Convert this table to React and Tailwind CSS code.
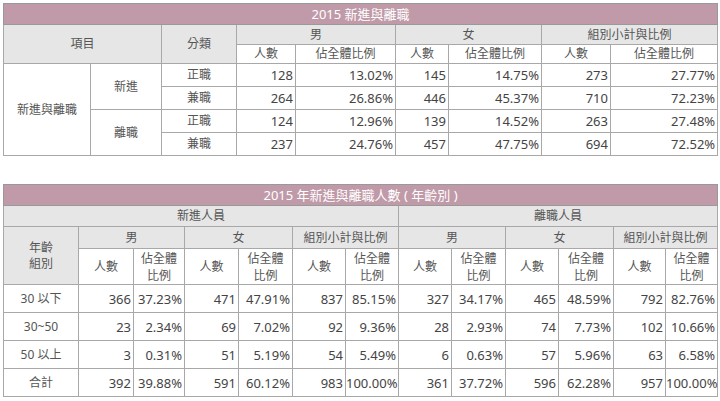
const font = { fontFamily: '"Noto Sans", "Noto Sans CJK TC", sans-serif' };

const topRows = [
  ["正職", "128", "13.02%", "145", "14.75%", "273", "27.77%"],
  ["兼職", "264", "26.86%", "446", "45.37%", "710", "72.23%"],
  ["正職", "124", "12.96%", "139", "14.52%", "263", "27.48%"],
  ["兼職", "237", "24.76%", "457", "47.75%", "694", "72.52%"],
];

const ageRows = [
  ["30 以下", "366", "37.23%", "471", "47.91%", "837", "85.15%", "327", "34.17%", "465", "48.59%", "792", "82.76%"],
  ["30~50", "23", "2.34%", "69", "7.02%", "92", "9.36%", "28", "2.93%", "74", "7.73%", "102", "10.66%"],
  ["50 以上", "3", "0.31%", "51", "5.19%", "54", "5.49%", "6", "0.63%", "57", "5.96%", "63", "6.58%"],
  ["合計", "392", "39.88%", "591", "60.12%", "983", "100.00%", "361", "37.72%", "596", "62.28%", "957", "100.00%"],
];

const th = "border border-[#a8a8a8] bg-[#e6e6e6] font-normal text-center text-[#555] text-[12px] p-0";
const thw = "border border-[#a8a8a8] bg-white font-normal text-center text-[#555] text-[12px] p-0";
const td = "border border-[#a8a8a8] bg-white text-right text-[#444] text-[13px] pr-[2px] p-0";
const tdc = "border border-[#a8a8a8] bg-white text-center text-[#555] text-[12px] p-0";

function TopTable() {
  const cols = [87, 71, 75, 59, 100, 53, 93, 69, 107];
  return (
    <table className="table-fixed border-collapse w-[714px] leading-[16px] border border-[#999]">
      <colgroup>
        {cols.map((w, i) => (
          <col key={i} style={{ width: w }} />
        ))}
      </colgroup>
      <thead>
        <tr className="h-[21px]">
          <th colSpan={9} className="border border-[#999] bg-[#c09aa8] text-white text-[13px] font-normal text-center p-0">
            2015 新進與離職
          </th>
        </tr>
        <tr className="h-[20px]">
          <th colSpan={2} rowSpan={2} className={th}>項目</th>
          <th rowSpan={2} className={th}>分類</th>
          <th colSpan={2} className={th}>男</th>
          <th colSpan={2} className={th}>女</th>
          <th colSpan={2} className={th}>組別小計與比例</th>
        </tr>
        <tr className="h-[19px]">
          <th className={thw}>人數</th>
          <th className={thw}>佔全體比例</th>
          <th className={thw}>人數</th>
          <th className={thw}>佔全體比例</th>
          <th className={thw}>人數</th>
          <th className={thw}>佔全體比例</th>
        </tr>
      </thead>
      <tbody>
        {topRows.map((r, i) => (
          <tr key={i} className="h-[23px]">
            {i === 0 && (
              <td rowSpan={4} className={tdc}>新進與離職</td>
            )}
            {i % 2 === 0 && (
              <td rowSpan={2} className={tdc}>{i === 0 ? "新進" : "離職"}</td>
            )}
            <td className={tdc}>{r[0]}</td>
            {r.slice(1).map((v, j) => (
              <td key={j} className={td}>{v}</td>
            ))}
          </tr>
        ))}
      </tbody>
    </table>
  );
}

function AgeTable() {
  const cols = [75, 55, 51, 54, 54, 53, 53, 53, 54, 53, 55, 52, 52];
  const split = (
    <>
      <th className={thw}>人數</th>
      <th className={thw + " leading-[17px]"}>佔全體<br />比例</th>
    </>
  );
  return (
    <table className="table-fixed border-collapse w-[714px] leading-[16px] border border-[#999]">
      <colgroup>
        {cols.map((w, i) => (
          <col key={i} style={{ width: w }} />
        ))}
      </colgroup>
      <thead>
        <tr className="h-[21px]">
          <th colSpan={13} className="border border-[#999] bg-[#c09aa8] text-white text-[13px] font-normal text-center p-0">
            2015 年新進與離職人數 ( 年齡別 )
          </th>
        </tr>
        <tr className="h-[21px]">
          <th colSpan={7} className={th}>新進人員</th>
          <th colSpan={6} className={th}>離職人員</th>
        </tr>
        <tr className="h-[22px]">
          <th rowSpan={2} className={th + " leading-[16px]"}>年齡<br />組別</th>
          <th colSpan={2} className={th}>男</th>
          <th colSpan={2} className={th}>女</th>
          <th colSpan={2} className={th}>組別小計與比例</th>
          <th colSpan={2} className={th}>男</th>
          <th colSpan={2} className={th}>女</th>
          <th colSpan={2} className={th}>組別小計與比例</th>
        </tr>
        <tr className="h-[36px]">
          {split}
          {split}
          {split}
          {split}
          {split}
          {split}
        </tr>
      </thead>
      <tbody>
        {ageRows.map((r, i) => (
          <tr key={i} className="h-[28px]">
            <td className={tdc}>{r[0]}</td>
            {r.slice(1).map((v, j) => (
              <td key={j} className={td}>{v}</td>
            ))}
          </tr>
        ))}
      </tbody>
    </table>
  );
}

export default function App() {
  return (
    <div className="w-[720px] h-[401px] bg-white pt-[3px] pl-[3px]" style={font}>
      <TopTable />
      <div className="h-[28px]" />
      <AgeTable />
    </div>
  );
}
